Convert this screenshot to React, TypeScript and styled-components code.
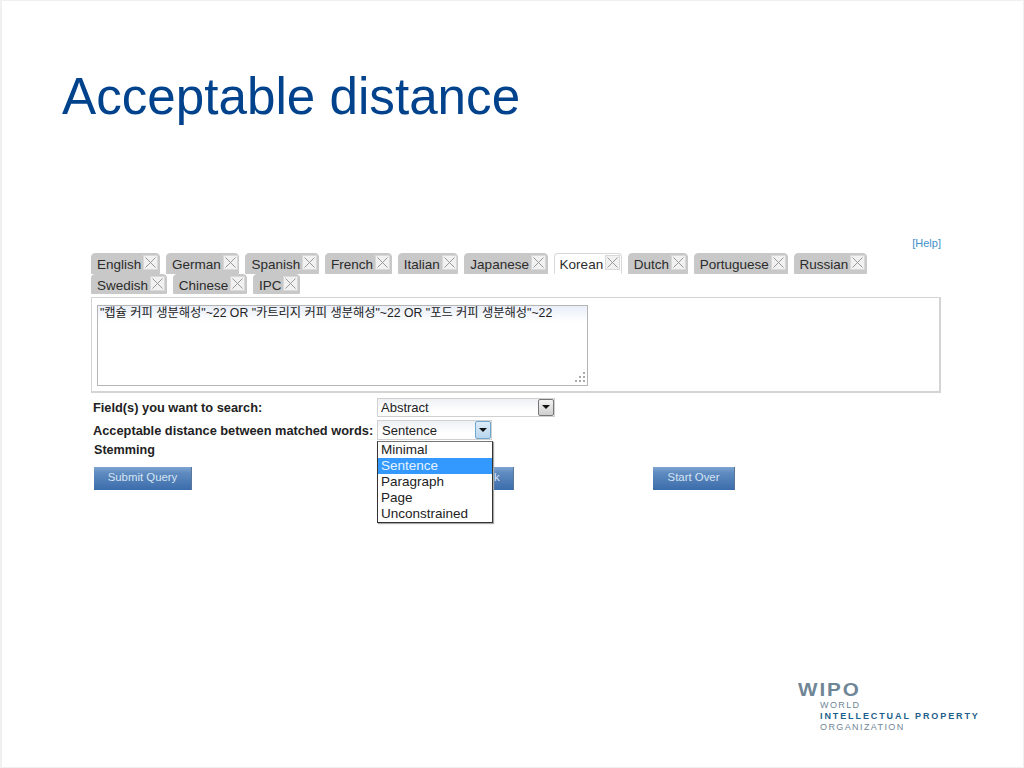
import React from "react";
import styled, { createGlobalStyle } from "styled-components";

const Global = createGlobalStyle`
  html, body { margin: 0; padding: 0; background: #fff; }
  body { font-family: "Liberation Sans", Arial, sans-serif; }
`;

const Slide = styled.div`
  width: 1024px; height: 768px; box-sizing: border-box; position: relative;
  background: #fff; border: 1px solid #f0f0f0; border-left-width: 2px;
  padding: 0 0 0 60px; display: flex; flex-direction: column; overflow: hidden;
`;
const Title = styled.h1`
  margin: 66px 0 0; font-size: 51.2px; line-height: 60px; font-weight: 400; color: #00428c;
`;
const HelpRow = styled.div`
  margin: 109px 0 0 30px; width: 849px; height: 15px; text-align: right;
  font-size: 11px; line-height: 15px; color: #3f92c9;
`;
const Tabs = styled.div`
  margin: 2px 0 0 29px; width: 850px; display: flex; flex-wrap: wrap; column-gap: 6px; row-gap: 0;
`;
const Tab = styled.div<{ $active?: boolean }>`
  height: 20.5px; box-sizing: border-box; display: flex; align-items: flex-start; padding: 1px 0.7px 0 5px;
  gap: 2px; border-radius: 4px 4px 0 0; font-size: 13.5px; line-height: 19px; color: #2b2b2b;
  background: ${(p) => (p.$active ? "#fff" : "#c8c8c8")};
  border: 1px solid ${(p) => (p.$active ? "#d8d8d8" : "#c8c8c8")};
  border-bottom-color: ${(p) => (p.$active ? "#fff" : "#c8c8c8")};
`;
const Close = styled.svg`
  width: 15px; height: 15px; flex: none; background: #f1f1f1; border: 1px solid #d8d8d8; box-sizing: border-box;
`;
const Box = styled.div`
  margin: 3px 0 0 29px; width: 850px; height: 96px; box-sizing: border-box; border: 1px solid #d4d4d4; border-width: 1px 2px 2px 1px;
  padding: 7px 0 0 5px; background: #fff;
`;
const Area = styled.div`
  width: 491px; height: 81px; box-sizing: border-box; position: relative; border: 1px solid #b4b4b4;
  padding: 0 2px; font-family: "Liberation Sans", "Noto Sans CJK KR", sans-serif; font-size: 12.25px; line-height: 14px;
  color: #222; white-space: nowrap; overflow: hidden;
  background: linear-gradient(#e9eef8 0, #fff 16px);
`;
const Grip = styled.svg`
  position: absolute; right: 1px; bottom: 1px; width: 14px; height: 14px;
`;
const Field = styled.div`
  margin: 4px 0 0 31px; display: flex; align-items: center; height: 20px;
`;
const FieldTight = styled(Field)`
  margin-top: 3px;
`;
const Label = styled.label`
  width: 284px; flex: none; font-size: 12.8px; font-weight: 700; color: #222; white-space: nowrap;
`;
const Select = styled.div<{ $w: number; $focus?: boolean }>`
  width: ${(p) => p.$w}px; height: ${(p) => (p.$focus ? 20 : 19)}px; box-sizing: border-box; display: flex; align-items: center; justify-content: space-between;
  border: 1px solid #d0d0d0; font-size: 13px; color: #222; padding-left: ${(p) => (p.$focus ? 4 : 3)}px;
  background: linear-gradient(#eef0f5, #fff 70%);
`;
const Arrow = styled.span<{ $focus?: boolean }>`
  width: 16px; height: 100%; display: flex; align-items: center; justify-content: center; box-sizing: border-box;
  border: 1px solid ${(p) => (p.$focus ? "#6fa8cf" : "#777")}; border-radius: 2px;
  background: ${(p) => (p.$focus ? "linear-gradient(#dcebf8, #b9d6ee)" : "linear-gradient(#f2f2f2, #cfcfcf)")};
  &::after { content: ""; border: 4px solid transparent; border-top: 4px solid #111; border-bottom: 0; }
`;
const Stem = styled.div`
  margin: 1px 0 0 32px; height: 18px; font-size: 12.6px; line-height: 18px; font-weight: 700; color: #222;
`;
const Buttons = styled.div`
  margin: 8px 0 0 32px; display: flex;
`;
const Btn = styled.div<{ $w: number; $ml?: number }>`
  width: ${(p) => p.$w}px; margin-left: ${(p) => p.$ml ?? 0}px; height: 23px; box-sizing: border-box; padding-bottom: 3px;
  display: flex; align-items: center; justify-content: center; font-size: 11.4px; color: #d6e4f3;
  background: linear-gradient(#7fa5d2 0, #5f8bc0 25%, #3b6cab 100%); border-right: 1px solid #5b7797;
`;
const Menu = styled.div`
  position: absolute; left: 375px; top: 440px; width: 116px; box-sizing: border-box; background: #fff;
  border: 1px solid #333; border-top-color: #777; box-shadow: 1px 1px 1px #aaa; font-size: 13.5px; line-height: 16px; color: #222;
`;
const Option = styled.div<{ $sel?: boolean }>`
  padding-left: 3px; height: 16px;
  background: ${(p) => (p.$sel ? "#3399ff" : "#fff")}; color: ${(p) => (p.$sel ? "#e6f3ff" : "#222")};
`;
const Logo = styled.div`
  position: absolute; left: 796px; top: 679px; color: #6f8696;
`;
const LogoMark = styled.div`
  font-size: 17.5px; line-height: 20px; font-weight: 700; letter-spacing: 1.6px; color: #6f8696; transform: scaleX(1.18); transform-origin: left;
`;
const LogoLine = styled.div<{ $bold?: boolean }>`
  margin-left: 22px; font-size: 9px; line-height: 11px; letter-spacing: ${(p) => (p.$bold ? 1.9 : 1.4)}px;
  font-weight: ${(p) => (p.$bold ? 700 : 400)}; color: ${(p) => (p.$bold ? "#1f5f8b" : "#6f8696")}; white-space: nowrap;
`;

const tabs1 = ["English", "German", "Spanish", "French", "Italian", "Japanese", "Korean", "Dutch", "Portuguese", "Russian", "Swedish", "Chinese", "IPC"];

const X = () => (
  <Close viewBox="0 0 13 13">
    <path d="M1.5 1.5L11.5 11.5M11.5 1.5L1.5 11.5" stroke="#9a9a9a" strokeWidth="1" fill="none" />
  </Close>
);

export default function App() {
  return (
    <>
      <Global />
      <Slide>
        <Title>Acceptable distance</Title>
        <HelpRow>[Help]</HelpRow>
        <Tabs>
          {tabs1.map((t) => (
            <Tab key={t} $active={t === "Korean"}>
              {t}
              <X />
            </Tab>
          ))}
        </Tabs>
        <Box>
          <Area>
            "캡슐 커피 생분해성"~22 OR "카트리지 커피 생분해성"~22 OR "포드 커피 생분해성"~22
            <Grip viewBox="0 0 14 14">
              <g fill="#aaa">
                <rect x="11" y="2" width="2" height="2" />
                <rect x="7" y="6" width="2" height="2" />
                <rect x="11" y="6" width="2" height="2" />
                <rect x="3" y="10" width="2" height="2" />
                <rect x="7" y="10" width="2" height="2" />
                <rect x="11" y="10" width="2" height="2" />
              </g>
            </Grip>
          </Area>
        </Box>
        <Field>
          <Label>Field(s) you want to search:</Label>
          <Select $w={178}>
            Abstract
            <Arrow />
          </Select>
        </Field>
        <FieldTight>
          <Label>Acceptable distance between matched words:</Label>
          <Select $w={115} $focus>
            Sentence
            <Arrow $focus />
          </Select>
        </FieldTight>
        <Stem>Stemming</Stem>
        <Buttons>
          <Btn $w={98}>Submit Query</Btn>
          <Btn $w={60} $ml={262}>Check</Btn>
          <Btn $w={82} $ml={139}>Start Over</Btn>
        </Buttons>
        <Menu>
          <Option>Minimal</Option>
          <Option $sel>Sentence</Option>
          <Option>Paragraph</Option>
          <Option>Page</Option>
          <Option>Unconstrained</Option>
        </Menu>
        <Logo>
          <LogoMark>WIPO</LogoMark>
          <LogoLine>WORLD</LogoLine>
          <LogoLine $bold>INTELLECTUAL PROPERTY</LogoLine>
          <LogoLine>ORGANIZATION</LogoLine>
        </Logo>
      </Slide>
    </>
  );
}
